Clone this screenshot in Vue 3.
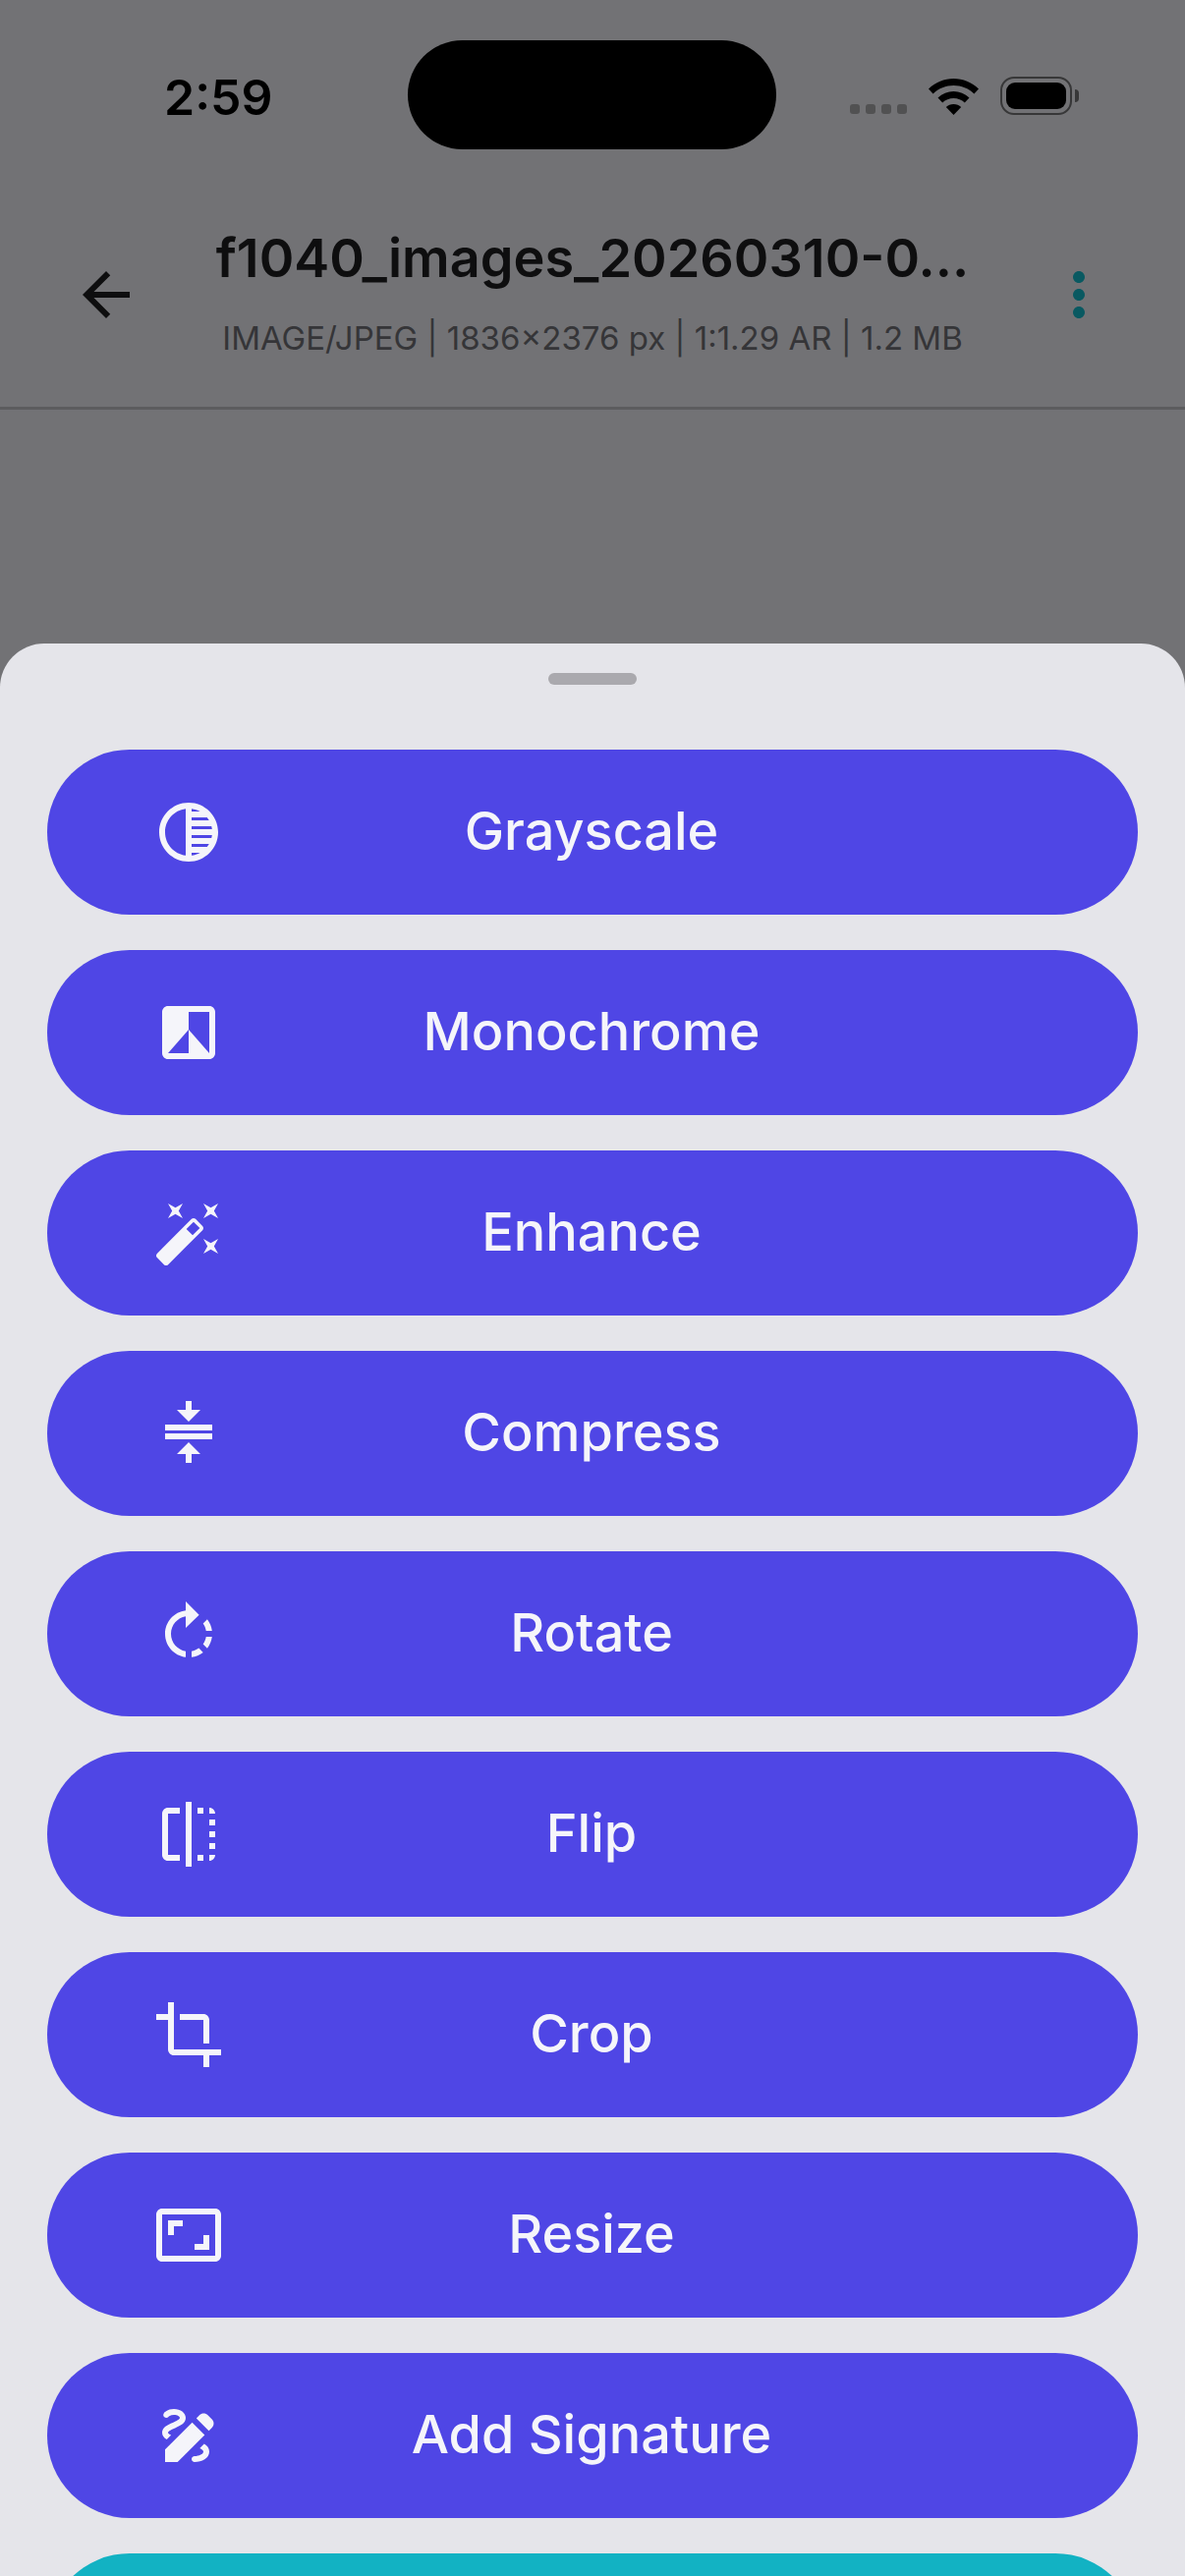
<template>
  <div class="screen">
    <div class="page">
      <div class="status-bar">
        <span class="time">2:59</span>
        <div class="island"></div>
        <div class="status-icons">
          <div class="signal">
            <i v-for="n in 4" :key="n"></i>
          </div>
          <svg class="wifi" viewBox="0 0 51 37" width="51" height="37">
            <path d="M25.5 0C35 0 44 3.8 51 10.4l-4.6 5C40.700 10 33.400 7 25.500 7S10.300 10 4.600 15.400L0 10.400C7 3.800 16 0 25.500 0z" fill="#000"/>
            <path d="M25.500 13c6 0 11.600 2.300 16 6.400l-4.700 5c-3-2.800-7-4.400-11.300-4.400s-8.300 1.600-11.300 4.400l-4.700-5C13.900 15.300 19.500 13 25.500 13z" fill="#000"/>
            <path d="M25.500 26c3 0 5.700 1.100 7.700 3L25.500 37l-7.700-8c2-1.900 4.700-3 7.700-3z" fill="#000"/>
          </svg>
          <div class="battery">
            <div class="battery-body"><div class="battery-fill"></div></div>
            <div class="battery-cap"></div>
          </div>
        </div>
      </div>

      <header class="top-bar">
        <svg class="bar-icon" viewBox="0 0 24 24" width="72" height="72">
          <path d="M20 11H7.830l5.590-5.590L12 4l-8 8 8 8 1.410-1.410L7.830 13H20v-2z" fill="#1c1c1e"/>
        </svg>
        <div class="file-info">
          <div class="file-name">f1040_images_20260310-0...</div>
          <div class="file-meta">IMAGE/JPEG | 1836×2376 px | 1:1.29 AR | 1.2 MB</div>
        </div>
        <svg class="bar-icon" viewBox="0 0 24 24" width="72" height="72">
          <path d="M12 8c1.100 0 2-.9 2-2s-.9-2-2-2-2 .9-2 2 .9 2 2 2zm0 2c-1.100 0-2 .9-2 2s.9 2 2 2 2-.9 2-2-.9-2-2-2zm0 6c-1.100 0-2 .9-2 2s.9 2 2 2 2-.9 2-2-.9-2-2-2z" fill="#12b2c3"/>
        </svg>
      </header>
    </div>

    <div class="scrim"></div>

    <div class="sheet">
      <div class="handle"></div>
      <div class="actions">
        <button
          v-for="item in actions"
          :key="item.label"
          class="action"
          :class="{ teal: item.teal }"
        >
          <svg v-if="item.icon" viewBox="0 0 24 24" width="72" height="72">
            <path :d="item.icon" fill="currentColor"/>
          </svg>
          <span v-else></span>
          <span class="label">{{ item.label }}</span>
        </button>
      </div>
    </div>
  </div>
</template>

<script setup>
const actions = [
  {
    label: 'Grayscale',
    icon: 'M12 2C6.480 2 2 6.480 2 12s4.480 10 10 10 10-4.480 10-10S17.520 2 12 2zm-1 17.930c-3.940-.49-7-3.850-7-7.930s3.050-7.440 7-7.930v15.860zm2-15.860c1.030.13 2 .45 2.870.93H13v-.93zM13 7h5.240c.25.31.48.65.68 1H13V7zm0 3h6.740c.08.33.15.66.19 1H13v-1zm0 9.930V19h2.870c-.87.48-1.840.8-2.870.93zM18.240 17H13v-1h5.920c-.2.35-.43.69-.68 1zm1.500-3H13v-1h6.930c-.04.34-.11.67-.19 1z'
  },
  {
    label: 'Monochrome',
    icon: 'M19 3H5c-1.100 0-2 .9-2 2v14c0 1.100.9 2 2 2h14c1.100 0 2-.9 2-2V5c0-1.100-.9-2-2-2zm0 16l-7-8v8H5l7-8V5h7v14z'
  },
  {
    label: 'Enhance',
    icon: 'M7.500 5.600L10 7 8.600 4.500 10 2 7.500 3.400 5 2l1.400 2.500L5 7zm12 9.800L17 14l1.400 2.500L17 19l2.500-1.400L22 19l-1.400-2.500L22 14zM22 2l-2.500 1.400L17 2l1.400 2.500L17 7l2.500-1.400L22 7l-1.400-2.500zm-7.630 5.290c-.39-.39-1.020-.39-1.410 0L1.290 18.960c-.39.39-.39 1.020 0 1.410l2.340 2.340c.39.39 1.020.39 1.410 0L16.700 11.050c.39-.39.39-1.020 0-1.410l-2.330-2.350zm-1.030 5.490l-2.120-2.120 2.440-2.440 2.120 2.120-2.440 2.440z'
  },
  {
    label: 'Compress',
    icon: 'M8 19h3v3h2v-3h3l-4-4-4 4zm8-15h-3V1h-2v3H8l4 4 4-4zM4 9v2h16V9H4zm0 3h16v2H4v-2z'
  },
  {
    label: 'Rotate',
    icon: 'M15.550 5.550L11 1v3.070C7.060 4.560 4 7.920 4 12s3.050 7.440 7 7.930v-2.020c-2.840-.48-5-2.940-5-5.910s2.160-5.430 5-5.910V10l4.550-4.450zM19.930 11c-.17-1.390-.72-2.730-1.620-3.890l-1.420 1.420c.54.75.88 1.600 1.020 2.470h2.020zM13 17.900v2.020c1.390-.17 2.740-.71 3.900-1.610l-1.440-1.440c-.75.54-1.590.89-2.460 1.030zm3.890-2.420l1.420 1.410c.9-1.160 1.450-2.500 1.620-3.890h-2.020c-.14.87-.48 1.720-1.020 2.480z'
  },
  {
    label: 'Flip',
    icon: 'M15 21h2v-2h-2v2zm4-12h2V7h-2v2zM3 5v14c0 1.100.9 2 2 2h4v-2H5V5h4V3H5c-1.100 0-2 .9-2 2zm16-2v2h2c0-1.100-.9-2-2-2zm-8 20h2V1h-2v22zm8-6h2v-2h-2v2zM15 5h2V3h-2v2zm4 8h2v-2h-2v2zm0 8c1.100 0 2-.9 2-2h-2v2z'
  },
  {
    label: 'Crop',
    icon: 'M17 15h2V7c0-1.100-.9-2-2-2H9v2h8v8zM7 17V1H5v4H1v2h4v10c0 1.100.9 2 2 2h10v4h2v-4h4v-2H7z'
  },
  {
    label: 'Resize',
    icon: 'M19 12h-2v3h-3v2h5v-5zM7 9h3V7H5v5h2V9zm14-6H3c-1.100 0-2 .9-2 2v14c0 1.100.9 2 2 2h18c1.100 0 2-.9 2-2V5c0-1.100-.9-2-2-2zm0 16.010H3V4.990h18v14.020z'
  },
  {
    label: 'Add Signature',
    icon: 'M18.850 10.390l1.060-1.060c.78-.78.78-2.050 0-2.830L18.500 5.090c-.78-.78-2.050-.78-2.830 0l-1.060 1.060L18.850 10.390zM13.190 7.560L4 16.760V21h4.240l9.190-9.190L13.190 7.560zM19 17.500c0 2.190-2.540 3.500-5 3.500c-.55 0-1-.45-1-1s.45-1 1-1c1.540 0 3-.73 3-1.500c0-.47-.48-.87-1.230-1.200l1.480-1.480C18.320 15.450 19 16.290 19 17.500zM4.580 13.350C3.610 12.790 3 12.060 3 11c0-1.800 1.890-2.630 3.560-3.360C7.590 7.180 9 6.560 9 6c0-.41-.78-1-2-1C5.740 5 5.200 5.610 5.170 5.640C4.820 6.050 4.190 6.100 3.770 5.760C3.360 5.420 3.280 4.810 3.620 4.380C3.730 4.240 4.760 3 7 3c2.240 0 4 1.320 4 3c0 1.870-1.930 2.720-3.640 3.470C6.420 9.880 5 10.500 5 11c0 .31.43.6 1.070.86L4.580 13.350z'
  },
  { label: '', icon: '', teal: true }
]
</script>

<style>
html,
body {
  overflow: hidden;
}
</style>

<style scoped>
.screen {
  position: relative;
  width: 1206px;
  height: 2622px;
  overflow: hidden;
  background: #e5e5ea;
  font-family: Inter, 'Liberation Sans', sans-serif;
}

.status-bar {
  display: flex;
  align-items: flex-start;
  height: 152px;
  padding: 41px 0 0 167px;
  box-sizing: border-box;
}

.time {
  width: 248px;
  margin-top: 27px;
  font-size: 50px;
  line-height: 62px;
  font-weight: 600;
  color: #000;
}

.island {
  width: 375px;
  height: 111px;
  border-radius: 56px;
  background: #000;
}

.status-icons {
  display: flex;
  align-items: flex-end;
  margin: 37px 0 0 75px;
}

.signal {
  display: flex;
  gap: 6px;
  margin-bottom: 1px;
}

.signal i {
  width: 10px;
  height: 10px;
  border-radius: 3px;
  background: #a3a3a5;
}

.wifi {
  margin-left: 22px;
}

.battery {
  display: flex;
  align-items: center;
  margin-left: 22px;
}

.battery-body {
  width: 73px;
  height: 39px;
  box-sizing: border-box;
  padding: 4px;
  border: 2px solid #6e6e70;
  border-radius: 14px;
}

.battery-fill {
  height: 100%;
  border-radius: 9px;
  background: #000;
}

.battery-cap {
  width: 4px;
  height: 13px;
  margin-left: 3px;
  border-radius: 0 6px 6px 0;
  background: #6e6e70;
}

.top-bar {
  display: flex;
  align-items: center;
  height: 265px;
  padding: 33px 72px 0;
  box-sizing: border-box;
  border-bottom: 3px solid #b8b8bc;
}

.bar-icon {
  flex: none;
}

.file-info {
  flex: 1;
  margin-bottom: 6px;
  text-align: center;
  white-space: nowrap;
}

.file-name {
  font-size: 54px;
  line-height: 66px;
  font-weight: 600;
  color: #1c1c1e;
}

.file-meta {
  margin-top: 28px;
  font-size: 33px;
  line-height: 40px;
  color: #6b6b70;
}

.scrim {
  position: absolute;
  inset: 0;
  background: rgba(0, 0, 0, 0.5);
}

.sheet {
  position: absolute;
  top: 655px;
  left: 0;
  right: 0;
  bottom: 0;
  padding: 0 48px;
  overflow: hidden;
  border-radius: 45px 45px 0 0;
  background: #e5e5ea;
}

.handle {
  width: 90px;
  height: 12px;
  margin: 30px auto 66px;
  border-radius: 6px;
  background: #aaa9ae;
}

.actions {
  display: flex;
  flex-direction: column;
  gap: 36px;
}

.action {
  display: grid;
  grid-template-columns: 72px 1fr 72px;
  align-items: center;
  flex: none;
  height: 168px;
  padding: 0 108px;
  border: none;
  border-radius: 84px;
  background: #4f46e5;
  color: #f5f5fa;
  font-family: inherit;
}

.action.teal {
  background: #12b2c3;
}

.action svg {
  display: block;
}

.label {
  margin: 0 2px 4px 0;
  font-size: 54px;
  font-weight: 500;
  text-align: center;
}
</style>
